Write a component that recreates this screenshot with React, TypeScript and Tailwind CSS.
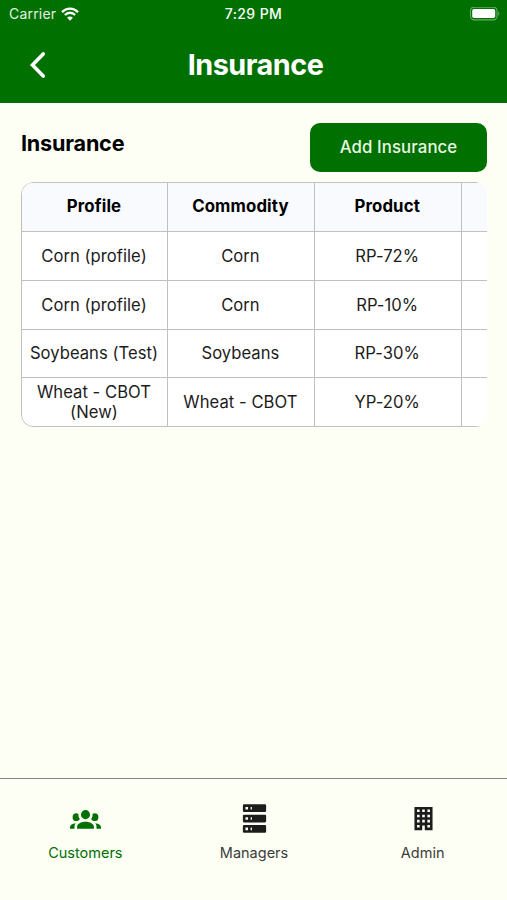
import type { ReactNode } from 'react';

const headers = ['Profile', 'Commodity', 'Product', ''];
const rows = [
  ['Corn (profile)', 'Corn', 'RP-72%', ''],
  ['Corn (profile)', 'Corn', 'RP-10%', ''],
  ['Soybeans (Test)', 'Soybeans', 'RP-30%', ''],
  ['Wheat - CBOT (New)', 'Wheat - CBOT', 'YP-20%', ''],
];

const groupPath =
  'M12,5.5A3.5,3.5 0 0,1 15.5,9A3.5,3.5 0 0,1 12,12.5A3.5,3.5 0 0,1 8.5,9A3.5,3.5 0 0,1 12,5.5M5,8C5.56,8 6.08,8.15 6.53,8.42C6.38,9.85 6.8,11.27 7.66,12.38C7.16,13.34 6.16,14 5,14A3,3 0 0,1 2,11A3,3 0 0,1 5,8M19,8A3,3 0 0,1 22,11A3,3 0 0,1 19,14C17.84,14 16.84,13.34 16.34,12.38C17.2,11.27 17.62,9.85 17.47,8.42C17.92,8.15 18.44,8 19,8M5.5,18.25C5.5,16.18 8.41,14.5 12,14.5C15.59,14.5 18.5,16.18 18.5,18.25V20H5.5V18.25M0,20V18.5C0,17.11 1.89,15.94 4.45,15.6C3.86,16.28 3.5,17.22 3.5,18.25V20H0M24,20H20.5V18.25C20.5,17.22 20.14,16.28 19.55,15.6C22.11,15.94 24,17.11 24,18.5V20Z';
const serverPath =
  'M4,1H20A1,1 0 0,1 21,2V6A1,1 0 0,1 20,7H4A1,1 0 0,1 3,6V2A1,1 0 0,1 4,1M4,9H20A1,1 0 0,1 21,10V14A1,1 0 0,1 20,15H4A1,1 0 0,1 3,14V10A1,1 0 0,1 4,9M4,17H20A1,1 0 0,1 21,18V22A1,1 0 0,1 20,23H4A1,1 0 0,1 3,22V18A1,1 0 0,1 4,17M9,5H10V3H9V5M9,13H10V11H9V13M9,21H10V19H9V21M5,3V5H7V3H5M5,11V13H7V11H5M5,19V21H7V19H5Z';
const officePath =
  'M5,3V21H11V17.5H13V21H19V3H5M7,5H9V7H7V5M11,5H13V7H11V5M15,5H17V7H15V5M7,9H9V11H7V9M11,9H13V11H11V9M15,9H17V11H15V9M7,13H9V15H7V13M11,13H13V15H11V13M15,13H17V15H15V13M7,17H9V19H7V17M15,17H17V19H15V17Z';

function Cell({ children, header }: { children: ReactNode; header?: boolean }) {
  return (
    <div
      className={
        header
          ? 'flex w-[146.8px] shrink-0 items-center justify-center border-r border-[#c0c0c0] text-[16.8px] font-bold tracking-[0.12px] text-black first:w-[146px]'
          : 'flex w-[146.8px] shrink-0 items-center justify-center border-r border-[#c0c0c0] px-2 text-center text-[16.6px] leading-[20px] tracking-[0.04px] text-[#1c1c1c] first:w-[146px]'
      }
    >
      <span className="-ml-px">{children}</span>
    </div>
  );
}

function Tab({ label, path, active }: { label: string; path: string; active?: boolean }) {
  return (
    <button
      className={
        active
          ? 'flex flex-1 flex-col items-center pt-6 pl-px text-[#007000]'
          : 'flex flex-1 flex-col items-center pt-6 text-[#1c1c1c]'
      }
    >
      <svg viewBox="0 0 24 24" className={active ? 'ml-px size-[31px]' : 'ml-px size-[31px]'} fill="currentColor" fillRule="evenodd">
        <path d={path} />
      </svg>
      <span className={active ? 'mt-[9px] text-[14.5px] leading-5' : 'mt-[9px] text-[14.5px] leading-5 text-[#3c3c3c]'}>{label}</span>
    </button>
  );
}

export default function App() {
  return (
    <div className="flex h-[900px] w-[507px] flex-col overflow-hidden bg-[#fdfff5] font-['Inter',sans-serif]">
      <header className="h-[103px] shrink-0 bg-[#007000] text-white">
        <div className="grid h-[27px] grid-cols-[1fr_80px_1fr] items-center pr-[7px] pl-[7px] text-[13.6px]">
          <div className="flex items-center gap-[5px] pl-[2px] text-[#e4f2e0]">
            <span className="text-[14px] tracking-[0.2px]">Carrier</span>
            <svg width="18" height="14" viewBox="0 0 18 14" fill="none" stroke="white" strokeWidth="2.3">
              <path d="M1 5.1C5.5 .4 12.5 .4 17 5.1M3.9 8C6.8 5 11.2 5 14.1 8" />
              <path d="M9 13.8 6.1 10.7C7.7 9.1 10.3 9.1 11.9 10.7Z" fill="white" stroke="none" />
            </svg>
          </div>
          <div className="text-center text-[14px] font-medium tracking-[0.4px]">7:29 PM</div>
          <svg className="justify-self-end" width="31" height="14" viewBox="0 0 31 14" fill="none">
            <rect x="1.5" y=".1" width="26.5" height="12.8" rx="3.6" stroke="#65ac65" strokeWidth="1.1" />
            <rect x="3.2" y="1.9" width="23" height="9.2" rx="1.8" fill="white" />
            <path d="M29.2 4.4v4.4c1.6-.7 1.6-3.7 0-4.4Z" fill="#65ac65" />
          </svg>
        </div>
        <div className="grid h-[76px] grid-cols-[82px_1fr_78px] items-center">
          <button className="pl-[29px]">
            <svg width="18" height="28" viewBox="0 0 18 28" fill="none" stroke="white" strokeWidth="3.6" strokeLinecap="round" strokeLinejoin="miter">
              <path d="M14.2 2.9 3.5 14l10.7 11.1" />
            </svg>
          </button>
          <h1 className="text-center text-[28.8px] leading-9 font-bold tracking-[-0.5px]">Insurance</h1>
        </div>
      </header>

      <main className="flex-1 pr-[20px] pl-[21px] pt-5">
        <div className="flex justify-between">
          <h2 className="pt-[5px] text-[21.6px] leading-[30px] font-bold tracking-[-0.2px] text-black">Insurance</h2>
          <button className="h-[49px] w-[177px] rounded-[10px] bg-[#007000] text-[16.8px] font-medium tracking-[0.1px] text-[#e9f8e2]">
            Add Insurance
          </button>
        </div>
        <div className="mt-[10px] w-[466px] overflow-hidden rounded-[12px] bg-white">
          <div className="w-[588px] overflow-hidden rounded-l-[12px] border border-[#c0c0c0]">
            <div className="flex h-[49px] border-b border-[#c0c0c0] bg-[#f8fafd]">
              {headers.map((h, i) => (
                <Cell key={i} header>{h}</Cell>
              ))}
            </div>
            {rows.map((r, i) => (
              <div key={i} className={i < rows.length - 1 ? 'flex h-[48.8px] border-b border-[#c0c0c0]' : 'flex h-[48px]'}>
                {r.map((c, j) => (
                  <Cell key={j}>{c}</Cell>
                ))}
              </div>
            ))}
          </div>
        </div>
      </main>

      <nav className="flex h-[122px] shrink-0 border-t border-[#858585]">
        <Tab label="Customers" path={groupPath} active />
        <Tab label="Managers" path={serverPath} />
        <Tab label="Admin" path={officePath} />
      </nav>
    </div>
  );
}
